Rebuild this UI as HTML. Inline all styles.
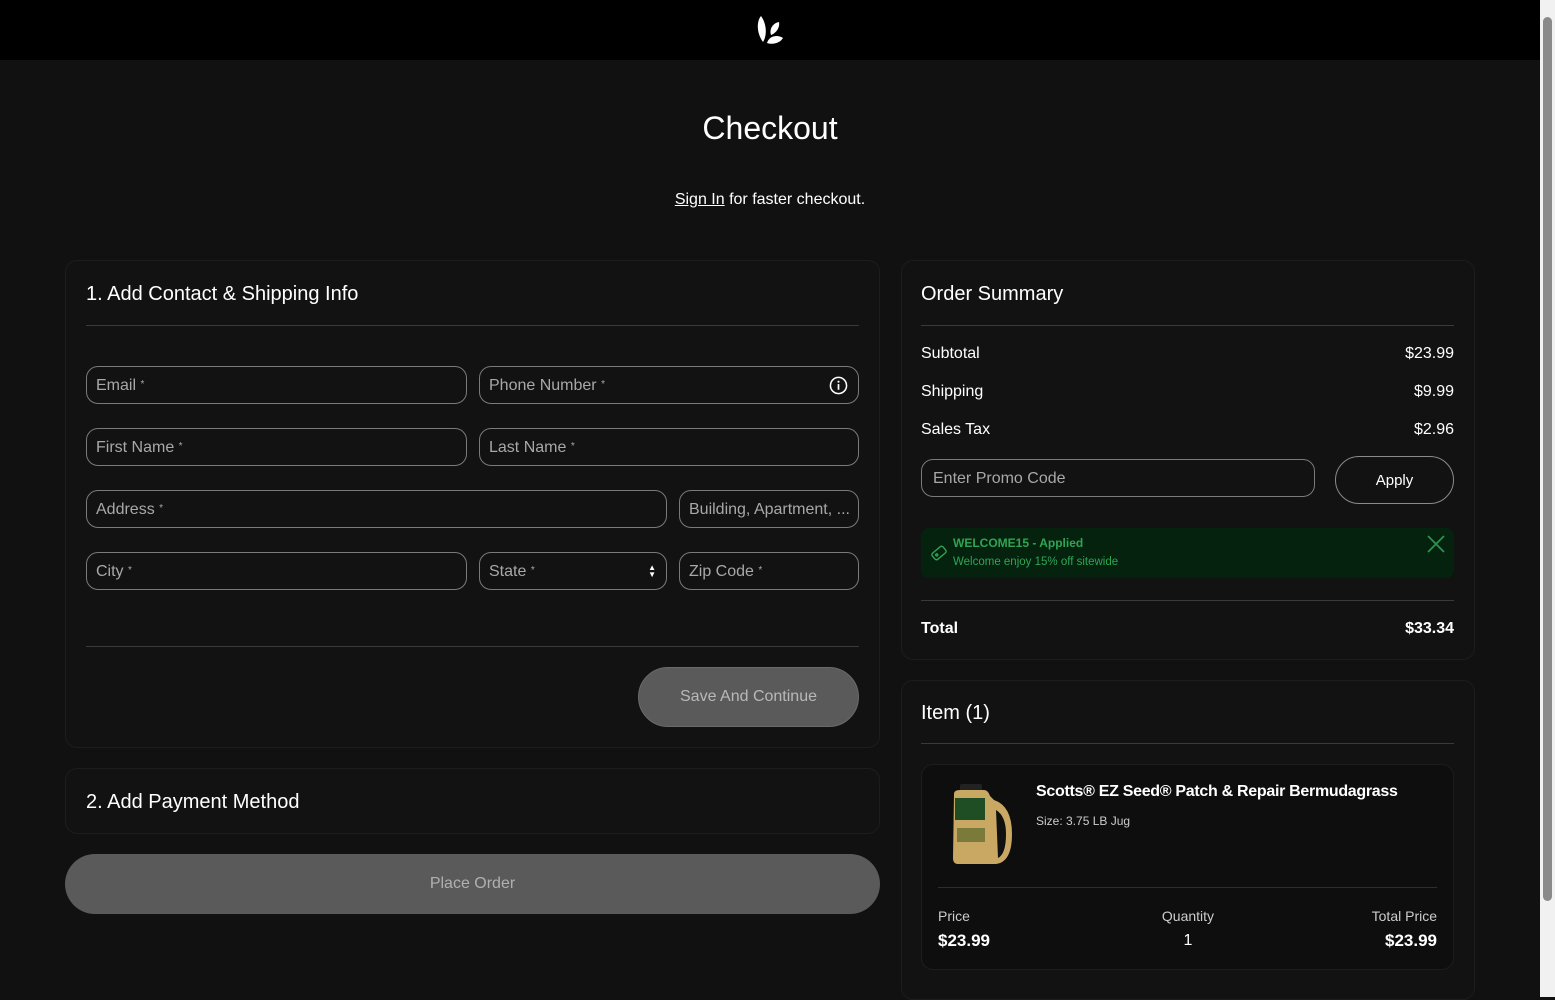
<!DOCTYPE html>
<html><head><style>
*{box-sizing:border-box;margin:0;padding:0}
body{width:1555px;height:997px;overflow:hidden;background:#111;font-family:"Liberation Sans",sans-serif;color:#fff;position:relative}
.top{position:absolute;left:0;top:0;width:1540px;height:60px;background:#000}
.sb{position:absolute;right:0;top:0;width:15px;height:997px;background:#f1f1f1}
.sb .th{position:absolute;left:3px;top:17px;width:9px;height:884px;background:#8a8a8a;border-radius:5px}
.card{position:absolute;background:#121212;border:1px solid #1d1d1d;border-radius:12px}
.abs{position:absolute}
.in{position:absolute;height:38px;border:1px solid #7a7a7a;border-radius:12px;color:#a8a8a8;font-size:16px;padding:10px 9px 8px;white-space:nowrap;overflow:hidden}
.in small{font-size:10px;vertical-align:top;position:relative;top:2px}
.hr{position:absolute;height:1px;background:#3a3a3a}
.row{position:absolute;left:921px;width:533px;font-size:16px;display:flex;justify-content:space-between}
</style></head><body>
<div class="top"></div>
<svg class="abs" style="left:755px;top:14px" width="30" height="32" viewBox="0 0 30 32"><path d="M6 2 C1 8 2 20 8 28 C12 22 12 10 6 2Z" fill="#fff"/><path d="M24 8 C18 9 14 15 16 21 C21 19 25 14 24 8Z" fill="#fff"/><path d="M28 24 C22 20 14 22 12 29 C18 31 25 29 28 24Z" fill="#fff"/></svg>
<div class="sb"><div class="th"></div></div>
<div class="abs" style="left:0;width:1540px;top:110px;text-align:center;font-size:32px">Checkout</div>
<div class="abs" style="left:0;width:1540px;top:191px;text-align:center;font-size:16px"><span style="text-decoration:underline">Sign In</span> for faster checkout.</div>

<div class="card" style="left:65px;top:260px;width:815px;height:488px"></div>
<div class="abs" style="left:86px;top:283px;font-size:20px">1. Add Contact &amp; Shipping Info</div>
<div class="hr" style="left:86px;top:325px;width:773px"></div>
<div class="in" style="left:86px;top:366px;width:381px">Email <small>*</small></div>
<div class="in" style="left:479px;top:366px;width:380px">Phone Number <small>*</small><svg class="abs" style="right:10px;top:9px" width="19" height="19" viewBox="0 0 20 20"><circle cx="10" cy="10" r="8.5" fill="none" stroke="#fff" stroke-width="1.6"/><rect x="9.1" y="8.5" width="1.8" height="6" fill="#fff"/><circle cx="10" cy="6" r="1.1" fill="#fff"/></svg></div>
<div class="in" style="left:86px;top:428px;width:381px">First Name <small>*</small></div>
<div class="in" style="left:479px;top:428px;width:380px">Last Name <small>*</small></div>
<div class="in" style="left:86px;top:490px;width:581px">Address <small>*</small></div>
<div class="in" style="left:679px;top:490px;width:180px">Building, Apartment, ...</div>
<div class="in" style="left:86px;top:552px;width:381px">City <small>*</small></div>
<div class="in" style="left:479px;top:552px;width:188px">State <small>*</small><span class="abs" style="right:10px;top:11px;font-size:8px;line-height:7px;color:#fff">▲<br>▼</span></div>
<div class="in" style="left:679px;top:552px;width:180px">Zip Code <small>*</small></div>
<div class="hr" style="left:86px;top:646px;width:773px"></div>
<div class="abs" style="left:638px;top:667px;width:221px;height:60px;border-radius:30px;background:#5a5a5a;border:1px solid #6a6a6a;color:#b8b8b8;font-size:16px;text-align:center;line-height:58px">Save And Continue</div>

<div class="card" style="left:65px;top:768px;width:815px;height:66px"></div>
<div class="abs" style="left:86px;top:791px;font-size:20px">2. Add Payment Method</div>
<div class="abs" style="left:65px;top:854px;width:815px;height:60px;border-radius:30px;background:#5a5a5a;color:#b0b0b0;font-size:16px;text-align:center;line-height:60px">Place Order</div>

<div class="card" style="left:901px;top:260px;width:574px;height:400px"></div>
<div class="abs" style="left:921px;top:283px;font-size:20px">Order Summary</div>
<div class="hr" style="left:921px;top:325px;width:533px"></div>
<div class="row" style="top:345px"><span>Subtotal</span><span>$23.99</span></div>
<div class="row" style="top:383px"><span>Shipping</span><span>$9.99</span></div>
<div class="row" style="top:421px"><span>Sales Tax</span><span>$2.96</span></div>
<div class="in" style="left:921px;top:459px;width:394px;height:38px;color:#a8a8a8;padding-left:11px">Enter Promo Code</div>
<div class="abs" style="left:1335px;top:456px;width:119px;height:48px;border:1px solid #8a8a8a;border-radius:24px;text-align:center;line-height:48px;font-size:15px">Apply</div>
<div class="abs" style="left:921px;top:528px;width:533px;height:50px;background:#05220f;border-radius:8px"></div>
<svg class="abs" style="left:930px;top:544px" width="18" height="18" viewBox="0 0 18 18"><g transform="rotate(-40 9 9)" fill="none" stroke="#2fa553" stroke-width="1.4"><rect x="2" y="5" width="14" height="8" rx="2"/><circle cx="6" cy="9" r="1"/></g></svg>
<div class="abs" style="left:953px;top:536px;font-size:12px;color:#2fa553;font-weight:bold">WELCOME15 - Applied</div>
<div class="abs" style="left:953px;top:556px;font-size:11.5px;color:#2fa553">Welcome enjoy 15% off sitewide</div>
<svg class="abs" style="left:1427px;top:535px" width="18" height="18"><path d="M1 1L17 17M17 1L1 17" stroke="#2f8f4d" stroke-width="1.8"/></svg>
<div class="hr" style="left:921px;top:600px;width:533px"></div>
<div class="row" style="top:620px;font-weight:bold"><span>Total</span><span>$33.34</span></div>

<div class="card" style="left:901px;top:680px;width:574px;height:320px"></div>
<div class="abs" style="left:921px;top:702px;font-size:20px">Item (1)</div>
<div class="hr" style="left:921px;top:743px;width:533px"></div>
<div class="card" style="left:921px;top:764px;width:533px;height:206px;background:#0e0e0e"></div>
<svg class="abs" style="left:950px;top:784px" width="64" height="84" viewBox="0 0 64 84"><rect x="10" y="0" width="22" height="8" rx="2" fill="#222"/><path d="M4 10 Q4 6 10 6 H34 Q38 6 40 12 L44 16 Q62 22 62 50 Q62 78 46 80 L8 80 Q3 80 3 74Z" fill="#c9a864"/><path d="M46 26 Q56 32 56 50 Q56 70 48 74 Z" fill="#111"/><rect x="5" y="14" width="30" height="22" fill="#1f4d24"/><rect x="7" y="44" width="28" height="14" fill="#7a7a3a"/></svg>
<div class="abs" style="left:1036px;top:783px;font-size:16px;font-weight:bold;letter-spacing:-0.3px">Scotts® EZ Seed® Patch &amp; Repair Bermudagrass</div>
<div class="abs" style="left:1036px;top:814px;font-size:12px;color:#ccc">Size: 3.75 LB Jug</div>
<div class="hr" style="left:938px;top:887px;width:499px;background:#2e2e2e"></div>
<div class="abs" style="left:938px;top:908px;font-size:14px;color:#ccc">Price</div>
<div class="abs" style="left:938px;top:931px;font-size:17px;font-weight:bold">$23.99</div>
<div class="abs" style="left:1138px;width:100px;text-align:center;top:908px;font-size:14px;color:#ccc">Quantity</div>
<div class="abs" style="left:1138px;width:100px;text-align:center;top:932px;font-size:16px">1</div>
<div class="abs" style="right:118px;top:908px;font-size:14px;color:#ccc">Total Price</div>
<div class="abs" style="right:118px;top:931px;font-size:17px;font-weight:bold">$23.99</div>
</body></html>
